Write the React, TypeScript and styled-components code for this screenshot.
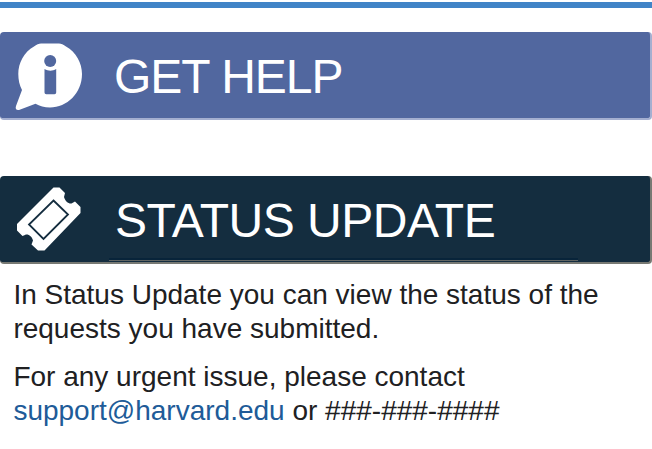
import React from "react";
import styled, { createGlobalStyle } from "styled-components";

const GlobalStyle = createGlobalStyle`
  * { box-sizing: border-box; }
  body {
    margin: 0;
    background: #fff;
    color: #202022;
    font-family: "Liberation Sans", Arial, sans-serif;
    overflow: hidden;
  }
`;

const Page = styled.main`
  display: flex;
  flex-direction: column;
  width: 652px;
  height: 449px;
  padding-top: 2px;
`;

const TopRule = styled.div`
  height: 6px;
  flex: none;
  background: #4184c7;
`;

const Banner = styled.section<{ $fill: string; $edge: string; $gap: number }>`
  position: relative;
  display: flex;
  align-items: center;
  flex: none;
  height: 88px;
  margin-top: ${(p) => p.$gap}px;
  background: ${(p) => p.$fill};
  border-right: 2px solid ${(p) => p.$edge};
  border-bottom: 2px solid ${(p) => p.$edge};
  border-radius: 4px;
`;

const IconSlot = styled.div`
  display: flex;
  width: 113px;
  height: 86px;
  flex: none;

  svg {
    display: block;
  }
`;

const Title = styled.h1<{ $size: number; $shift: number; $tracking: number }>`
  margin: 0;
  padding-left: ${(p) => p.$shift}px;
  padding-top: 3px;
  color: #fff;
  font-size: ${(p) => p.$size}px;
  line-height: 54px;
  font-weight: 400;
  letter-spacing: ${(p) => p.$tracking}px;
  white-space: nowrap;
`;

const LowerLine = styled.span`
  position: absolute;
  left: 109px;
  bottom: 0;
  width: 469px;
  height: 4px;
  border-top: 2px solid #08243a;
  border-bottom: 1px solid #142d3f;
  background: #606461;
`;

const Copy = styled.div`
  padding: 14px 14px 0 13.4px;
  font-size: 28px;
  line-height: 34px;
`;

const Paragraph = styled.p`
  margin: 0 0 14px;
  white-space: nowrap;
`;

const MailLink = styled.a`
  color: #205b98;
  text-decoration: none;
`;

const InfoBubble = () => (
  <svg width="100" height="86" viewBox="0 0 100 86" aria-hidden="true">
    <path
      fill="#fff"
      d="M41 11.5H59C61 11.5 63.5 12.8 66 14.5C76 20 82 31 82 42C82 61 67 75.5 50 75.5C44.5 75.5 39.5 74.2 35.5 71.8L19 78C16.5 78.5 15 77 16 74L22 58C19.5 53 18.3 48 18.3 42C18.3 31 24 20 34 14.5C36.5 12.8 39 11.5 41 11.5Z"
    />
    <circle cx="50.2" cy="29" r="6" fill="#51679f" />
    <path
      fill="#51679f"
      d="M44.5 37C48.5 39.2 52.5 39.2 56.2 37V60.5Q56.2 62.3 54.5 62.3H46.3Q44.5 62.3 44.5 60.5Z"
    />
  </svg>
);

const Ticket = () => (
  <svg width="100" height="86" viewBox="0 0 100 86" aria-hidden="true">
    <path
      fill="#fff"
      d="M53.5 11.5H59.5L65 17L64 21C65 25 68.5 28 71.5 27.5L75 25.5L80.5 31V37L44.5 74.5H38L31.5 68.5L33 64.5C32 60.5 28 57.5 25 59L22.5 60L17 54.5V48Z"
    />
    <path
      fill="none"
      stroke="#142d3f"
      strokeWidth="1.8"
      d="M53.5 24.5L68 38.5L43.5 63L29 48.5Z"
    />
  </svg>
);

export default function App() {
  return (
    <>
      <GlobalStyle />
      <Page>
        <TopRule />
        <Banner $fill="#51679f" $edge="#a4afd0" $gap={24}>
          <IconSlot>
            <InfoBubble />
          </IconSlot>
          <Title $size={48} $shift={1} $tracking={-1}>
            GET HELP
          </Title>
        </Banner>
        <Banner $fill="#142d3f" $edge="#777973" $gap={56}>
          <IconSlot>
            <Ticket />
          </IconSlot>
          <Title $size={48} $shift={2} $tracking={-0.5}>
            STATUS UPDATE
          </Title>
          <LowerLine />
        </Banner>
        <Copy>
          <Paragraph>
            In Status Update you can view the status of the
            <br />
            requests you have submitted.
          </Paragraph>
          <Paragraph>
            For any urgent issue, please contact
            <br />
            <MailLink href="mailto:support@harvard.edu">support@harvard.edu</MailLink> or ###-###-####
          </Paragraph>
        </Copy>
      </Page>
    </>
  );
}
